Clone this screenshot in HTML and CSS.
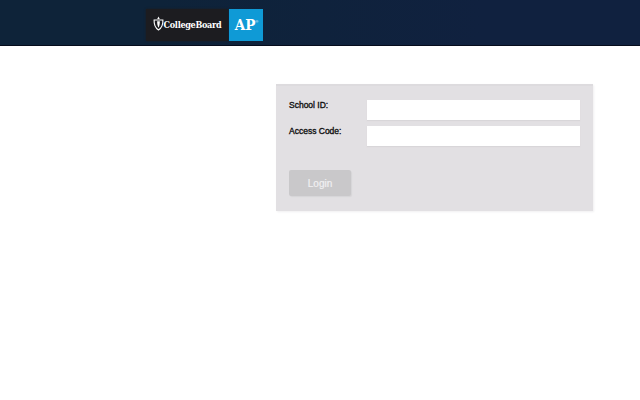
FILE: index.html
```html
<!DOCTYPE html>
<html lang="en">
<head>
<meta charset="utf-8">
<title>AP Login</title>
<link rel="stylesheet" href="styles.css">
</head>
<body>
<header class="header">
  <div class="brand">
    <div class="cb">
      <svg class="shield" viewBox="0 0 12 16" width="11" height="15" aria-hidden="true">
        <path d="M6 .3 7.400 3H4.600Z" fill="#fff"/>
        <path d="M1.200 4.200h9.600C11 8.500 9.500 12.800 6 15 2.500 12.800 1 8.500 1.200 4.200Z" fill="none" stroke="#fff" stroke-width="1.200"/>
        <path d="M4.500 5.500h3C7.500 8.500 6.900 11 6 12.500 5.100 11 4.500 8.500 4.500 5.500Z" fill="#fff"/>
      </svg>
      <span class="cb-name">CollegeBoard</span>
    </div>
    <div class="ap"><span class="ap-text">AP</span><sup class="ap-reg">®</sup></div>
  </div>
</header>
<main class="main">
  <form class="panel">
    <div class="row">
      <label class="label" for="school">School ID:</label>
      <input class="field" id="school" type="text">
    </div>
    <div class="row">
      <label class="label" for="code">Access Code:</label>
      <input class="field" id="code" type="text">
    </div>
    <button class="login" type="button">Login</button>
  </form>
</main>
</body>
</html>
```
FILE: styles.css
```css
html, body {
  margin: 0;
  padding: 0;
  height: 100%;
  background: #fff;
  overflow: hidden;
}
body {
  font-family: "Liberation Sans", Arial, sans-serif;
}
.header {
  height: 46px;
  box-sizing: border-box;
  padding: 9px 0 0 146px;
  background: linear-gradient(90deg, #0e2339 0%, #0e2339 25%, #10213f 75%, #10213f 100%);
  border-bottom: 1px solid #060c1c;
}
.brand {
  display: flex;
  gap: 1px;
  height: 32px;
}
.cb {
  width: 82px;
  display: flex;
  align-items: center;
  justify-content: center;
  gap: 0;
  background: #1c1c20;
  box-shadow: 0 0 2px #1c1c20;
}
.shield {
  flex: none;
  margin-top: -3px;
}
.cb-name {
  font-family: "DejaVu Serif Condensed", "DejaVu Serif", serif;
  font-weight: 700;
  font-size: 9px;
  letter-spacing: -0.300px;
  color: #fff;
}
.ap {
  width: 34px;
  display: flex;
  align-items: center;
  justify-content: center;
  padding-left: 1px;
  box-sizing: border-box;
  background: #0f9ad6;
  color: #fff;
}
.ap-text {
  font-family: "DejaVu Serif Condensed", "DejaVu Serif", serif;
  font-weight: 700;
  font-size: 15px;
}
.ap-reg {
  font-size: 4px;
  margin-bottom: 8px;
}
.main {
  padding: 38px 47px 0 276px;
}
.panel {
  height: 127px;
  box-sizing: border-box;
  padding: 14px 13px 0;
  background: #e2e0e3;
  border-top: 2px solid #dddbde;
  box-shadow: 1px 1px 2px #f0eff1;
}
.row {
  display: flex;
  height: 20px;
  margin-bottom: 6px;
}
.label {
  width: 78px;
  font-size: 8.500px;
  line-height: 11px;
  color: #111;
  -webkit-text-stroke: 0.350px #111;
}
.field {
  flex: 1;
  min-width: 0;
  box-sizing: border-box;
  height: 20px;
  padding: 0;
  border: 0;
  outline: 0;
  background: #fff;
  box-shadow: 0 1px 1px #d8d6d9;
}
.login {
  display: block;
  width: 62px;
  height: 26px;
  margin-top: 24px;
  padding: 0;
  border: 0;
  border-radius: 2px;
  background: #c9c8ca;
  color: #f1f0f2;
  font-family: inherit;
  font-size: 10px;
  -webkit-text-stroke: 0.200px #f1f0f2;
  box-shadow: 1px 1px 1px #d6d5d7;
}
```
